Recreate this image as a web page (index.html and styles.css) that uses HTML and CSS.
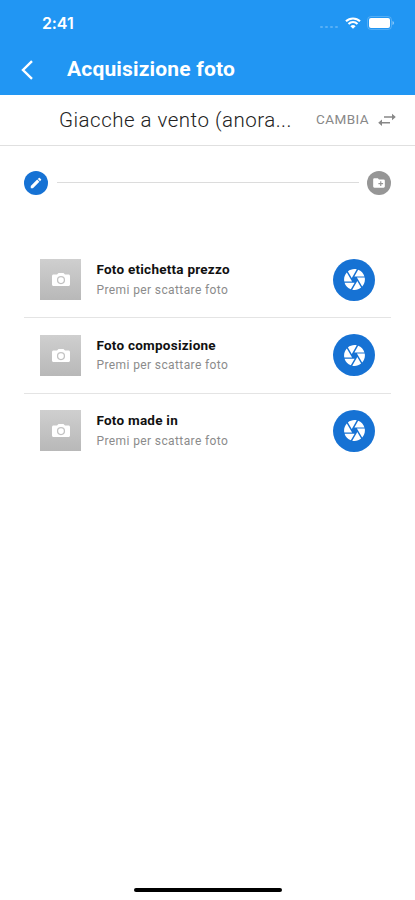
FILE: index.html
```html
<!DOCTYPE html>
<html lang="it">
<head>
<meta charset="utf-8">
<meta name="viewport" content="width=device-width, initial-scale=1">
<title>Acquisizione foto</title>
<link rel="stylesheet" href="styles.css">
</head>
<body>
<svg class="symbols" aria-hidden="true">
  <symbol id="camera" viewBox="0 0 18 13"><path fill-rule="evenodd" d="M6.500 0 5 1.500H1.500C.7 1.500 0 2.100 0 3v8.500C0 12.400.7 13 1.500 13h15c.8 0 1.500-.6 1.500-1.500V3c0-.9-.7-1.500-1.500-1.500H13L11.500 0zM9 3a4.100 4.100 0 1 1 0 8.200A4.100 4.100 0 0 1 9 3zm0 1.300a2.800 2.800 0 1 0 0 5.600 2.800 2.800 0 0 0 0-5.600z"/></symbol>
  <symbol id="shutter" viewBox="0 0 24 24"><path d="M9.400 10.500l4.770-8.260C13.470 2.090 12.750 2 12 2c-2.400 0-4.600.85-6.320 2.250l3.660 6.350.06-.1zM21.540 9c-.92-2.920-3.150-5.260-6-6.340L11.880 9h9.660zm.26 1h-7.490l.29.5 4.760 8.250C21 16.970 22 14.610 22 12c0-.69-.07-1.350-.2-2zM8.540 12l-3.900-6.750C3.010 7.030 2 9.390 2 12c0 .69.070 1.350.2 2h7.490l-1.150-2zm-6.080 3c.92 2.920 3.150 5.260 6 6.340L12.120 15H2.460zm11.270 0l-3.900 6.760c.7.150 1.420.24 2.170.24 2.400 0 4.600-.85 6.320-2.250l-3.660-6.350-.93 1.600z"/></symbol>
</svg>
<div class="app">
  <header>
    <div class="status">
      <span class="time">2:41</span>
      <span class="signal"><i></i><i></i><i></i><i></i></span>
      <svg class="wifi" viewBox="0 0 16 12"><path d="M1 4.300a10 10 0 0 1 14 0M3.500 6.900a6.400 6.400 0 0 1 9 0" fill="none" stroke="#fff" stroke-width="2.100"/><path d="M8 11.800 5.400 9.200a3.700 3.700 0 0 1 5.200 0z" fill="#fff"/></svg>
      <svg class="battery" viewBox="0 0 28 14"><rect x=".5" y=".5" width="24" height="13" rx="3.500" fill="none" stroke="#fff" stroke-opacity=".22"/><rect x="2" y="2" width="21" height="10" rx="2" fill="#fff"/><path d="M25.500 5v4q1.500-.5 1.500-2t-1.500-2z" fill="#fff" opacity=".5"/></svg>
    </div>
    <div class="bar">
      <svg class="back" viewBox="0 0 14 20"><path d="M12 1.200 3 10l9 8.800" fill="none" stroke="#fff" stroke-width="2.400"/></svg>
      <h1>Acquisizione foto</h1>
    </div>
  </header>
  <section class="category">
    <span class="name">Giacche a vento (anora...</span>
    <span class="change">CAMBIA</span>
    <svg class="swap" viewBox="0 0 18 14"><path d="M6 4h10M12 9.800H2" fill="none" stroke="#888" stroke-width="1.500"/><path d="M14 .8 17.800 4 14 7.200zM4 6.600.2 9.800 4 13z" fill="#888"/></svg>
  </section>
  <div class="steps">
    <span class="step active"><svg viewBox="0 0 24 24"><path d="M3 17.250V21h3.750L17.810 9.940l-3.750-3.750L3 17.250zM20.710 7.040a1 1 0 0 0 0-1.410l-2.340-2.340a1 1 0 0 0-1.410 0l-1.830 1.830 3.750 3.750 1.830-1.830z"/></svg></span>
    <span class="track"></span>
    <span class="step"><svg viewBox="0 0 24 24"><path fill-rule="evenodd" d="M20 6h-8l-2-2H4a2 2 0 0 0-2 2v12a2 2 0 0 0 2 2h16a2 2 0 0 0 2-2V8a2 2 0 0 0-2-2zm-1 8h-3v3h-2v-3h-3v-2h3V9h2v3h3z"/></svg></span>
  </div>
  <main>
    <div class="row">
      <span class="thumb"><svg><use href="#camera"/></svg></span>
      <div class="text"><h2>Foto etichetta prezzo</h2><p>Premi per scattare foto</p></div>
      <button><svg><use href="#shutter"/></svg></button>
    </div>
    <div class="row">
      <span class="thumb"><svg><use href="#camera"/></svg></span>
      <div class="text"><h2>Foto composizione</h2><p>Premi per scattare foto</p></div>
      <button><svg><use href="#shutter"/></svg></button>
    </div>
    <div class="row">
      <span class="thumb"><svg><use href="#camera"/></svg></span>
      <div class="text"><h2>Foto made in</h2><p>Premi per scattare foto</p></div>
      <button><svg><use href="#shutter"/></svg></button>
    </div>
  </main>
  <div class="home"></div>
</div>
</body>
</html>
```
FILE: styles.css
```css
* { box-sizing: border-box; margin: 0; padding: 0; }
body { background: #fff; font-family: Roboto, "Liberation Sans", sans-serif; }
svg { display: block; flex: none; }
.symbols { display: none; }
.app { width: 415px; height: 900px; display: flex; flex-direction: column; overflow: hidden; }
header { height: 95px; background: #2196f3; color: #fff; }
.status { height: 46px; padding-left: 42px; display: flex; align-items: center; }
.time { width: 278px; font: 600 16px/20px Inter, sans-serif; letter-spacing: -0.1px; }
.signal { display: flex; gap: 2px; width: 18px; margin-top: 8px; }
.signal i { width: 3px; height: 2px; border-radius: 1px; background: rgba(255, 255, 255, .25); }
.wifi { width: 16px; height: 12px; margin-left: 7px; }
.battery { width: 28px; height: 14px; margin-left: 6px; }
.bar { height: 49px; display: flex; align-items: center; padding: 0 0 2px 20px; }
.back { width: 14px; height: 20px; }
h1 { margin: 0 0 1.5px 33px; font-size: 21px; line-height: 24px; font-weight: 700; letter-spacing: 0.17px; }
.category { height: 51px; border-bottom: 1px solid #e0e0e0; display: flex; align-items: center; padding: 0 0 1px 59px; white-space: nowrap; }
.name { width: 257px; font-size: 20.5px; font-weight: 300; color: #222; letter-spacing: 0.49px; }
.change { width: 62px; margin-bottom: 2px; font-size: 13.5px; color: #888; letter-spacing: 0.45px; }
.swap { width: 18px; height: 14px; }
.steps { height: 73px; padding: 0 24px; display: flex; align-items: center; }
.step { width: 24px; height: 24px; border-radius: 50%; background: #969696; display: grid; place-items: center; }
.step.active { background: #1672d4; }
.step svg { width: 14px; height: 14px; fill: #fff; }
.track { flex: 1; height: 1px; margin: 0 8px 0 9px; background: #dcdcdc; }
main { margin: 23.5px 24px 0; }
.row { height: 75.5px; padding: 0 16px; display: flex; align-items: center; border-bottom: 1px solid #e4e4e4; }
.row:last-child { border-bottom-color: transparent; }
.thumb { width: 41px; height: 41px; background: linear-gradient(#cfcfcf, #b8b8b8); display: grid; place-items: center; }
.thumb svg { width: 18px; height: 13px; fill: #fff; }
.text { flex: 1; margin-left: 15.5px; padding-top: 1px; }
h2 { font-size: 13.5px; line-height: 19.5px; font-weight: 700; color: #111; letter-spacing: 0.24px; white-space: nowrap; }
p { font-size: 12px; line-height: 20.5px; color: #8b8b8b; letter-spacing: 0.39px; white-space: nowrap; }
button { width: 42px; height: 42px; border: 0; border-radius: 50%; background: #1672d4; display: grid; place-items: center; }
button svg { width: 25px; height: 25px; fill: #fff; }
.home { width: 148px; height: 4px; border-radius: 2px; background: #000; margin: auto auto 8px 134px; }
```
